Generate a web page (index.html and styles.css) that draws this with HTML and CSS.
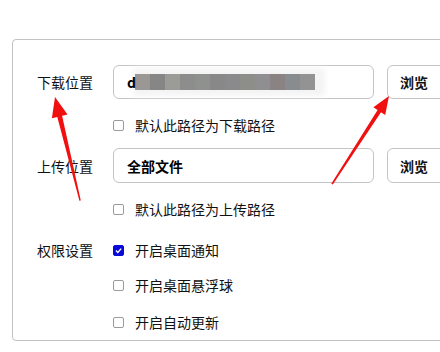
FILE: index.html
```html
<!DOCTYPE html>
<html lang="zh">
<head>
<meta charset="utf-8">
<link rel="stylesheet" href="styles.css">
</head>
<body>
<div class="panel">
  <div class="row field">
    <span class="label">下载位置</span>
    <div class="input"><span class="val">d</span><span class="blur"></span></div>
    <button class="btn">浏览</button>
  </div>
  <div class="row cb cb1"><span class="box"></span><span>默认此路径为下载路径</span></div>
  <div class="row field f2">
    <span class="label">上传位置</span>
    <div class="input"><span class="val">全部文件</span></div>
    <button class="btn">浏览</button>
  </div>
  <div class="row cb cb2"><span class="box"></span><span>默认此路径为上传路径</span></div>
  <div class="row cb perm"><span class="label">权限设置</span><span class="box checked"><svg viewBox="0 0 11 11" width="11" height="11"><path d="M3 5.6 L4.8 7.4 L8.2 3.6" fill="none" stroke="#fff" stroke-width="1.4"/></svg></span><span>开启桌面通知</span></div>
  <div class="row cb p2"><span class="box"></span><span>开启桌面悬浮球</span></div>
  <div class="row cb p3"><span class="box"></span><span>开启自动更新</span></div>
</div>
<svg class="arrows" width="440" height="352" viewBox="0 0 440 352">
  <polygon fill="#f01010" points="55,97 67.5,114.5 62.1,115.8 80.8,200.5 79.4,200.8 57.3,117 51.9,118.3"/>
  <polygon fill="#f01010" points="389,96 385.2,114.9 381,112.2 332.8,184.5 331.3,183.8 377.6,110 373.4,107.3"/>
</svg>
</body>
</html>
```
FILE: styles.css
```css
html, body {
  margin: 0;
  padding: 0;
  background: #fff;
  overflow: hidden;
}
body {
  width: 440px;
  height: 352px;
  position: relative;
  font-family: "Noto Sans CJK SC", "Noto Sans", sans-serif;
  font-size: 14px;
  color: #111;
}
.panel {
  margin: 39px 0 0 12px;
  width: 520px;
  height: 302px;
  box-sizing: border-box;
  border: 1px solid #c2c2c2;
  border-radius: 4px;
  padding: 25px 0 0 24px;
  display: flex;
  flex-direction: column;
}
.row {
  display: flex;
  align-items: center;
}
.label {
  width: 76px;
  flex: none;
  line-height: 20px;
}
.field {
  height: 34px;
}
.f2 {
  margin-top: 13px;
  height: 35px;
}
.input {
  width: 261px;
  height: 100%;
  box-sizing: border-box;
  border: 1px solid #c4c4c4;
  border-radius: 6px;
  display: flex;
  align-items: center;
  padding-left: 13px;
  font-weight: bold;
  position: relative;
}
.val {
  line-height: 20px;
  position: relative;
  z-index: 1;
  color: #000;
}
.blur {
  position: absolute;
  left: 21px;
  top: 8px;
  width: 180px;
  height: 16px;
  background: linear-gradient(to right,
    #9a9795 0 15px, #868686 15px 30px, #9b9b97 30px 45px, #8d8d8d 45px 60px,
    #8f918f 60px 75px, #888888 75px 90px, #8a8a8c 90px 105px, #8d8d8a 105px 120px,
    #8f8f91 120px 135px, #8a8283 135px 150px, #898c8e 150px 165px, #939393 165px 180px);
  box-shadow: 4px 0 6px 6px #f4f4f4;
}
.btn {
  margin-left: 13px;
  height: 100%;
  width: 60px;
  box-sizing: border-box;
  border: 1px solid #c4c4c4;
  border-radius: 6px;
  background: #fff;
  font-family: inherit;
  font-size: 14px;
  font-weight: bold;
  color: #111;
  text-align: left;
  padding: 0 0 0 12px;
}
.cb {
  height: 20px;
  line-height: 20px;
}
.cb1 { margin-top: 16px; padding-left: 76px; }
.cb2 { margin-top: 16px; padding-left: 76px; }
.perm { margin-top: 21px; }
.p2 { margin-top: 15px; padding-left: 76px; }
.p3 { margin-top: 17px; padding-left: 76px; }
.box {
  width: 11px;
  height: 11px;
  box-sizing: border-box;
  border: 1px solid #9a9a9a;
  border-radius: 2px;
  margin-right: 11px;
  flex: none;
  display: flex;
}
.box.checked {
  background: #0a0ad8;
  border-color: #0a0ad8;
}
.box svg {
  margin: -1px;
}
.arrows {
  position: absolute;
  left: 0;
  top: 0;
  pointer-events: none;
}
```
